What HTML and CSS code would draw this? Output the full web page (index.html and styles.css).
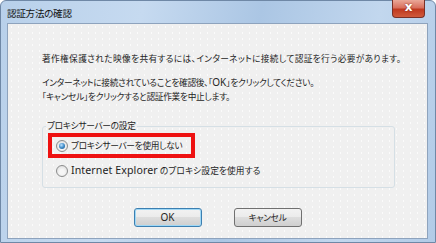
FILE: index.html
```html
<!DOCTYPE html>
<html lang="ja">
<head>
    <meta charset="UTF-8">
    <title>認証方法の確認</title>
    <link rel="stylesheet" href="styles.css">
</head>
<body>

    <div class="window">
        <div class="titlebar">
            <span class="title">認証方法の確認</span>
            <span class="close-btn">x</span>
        </div>

        <div class="client">
            <div class="content">
                <p class="msg msg-wide">著作権保護された映像を共有するには、インターネットに接続して認証を行う必要があります。</p>
                <p class="msg">インターネットに接続されていることを確認後、「<span class="latin">OK</span>」をクリックしてください。<br>「キャンセル」をクリックすると認証作業を中止します。</p>

                <fieldset class="group">
                    <legend>プロキシサーバーの設定</legend>
                    <div class="highlight">
                        <label class="option">
                            <span class="radio checked"></span>
                            <span>プロキシサーバーを使用しない</span>
                        </label>
                    </div>
                    <label class="option option-second">
                        <span class="radio"></span>
                        <span><span class="latin latin-wide">Internet Explorer</span>&nbsp;のプロキシ設定を使用する</span>
                    </label>
                </fieldset>
            </div>

            <div class="buttons">
                <button class="btn btn-default"><span class="latin">OK</span></button>
                <button class="btn">キャンセル</button>
            </div>
        </div>
    </div>

</body>
</html>
```

FILE: styles.css
```css
body {
    margin: 0;
    padding: 0;
    font-family: "Noto Sans CJK JP", "Noto Sans", sans-serif;
    font-size: 8.7px;
    letter-spacing: -0.3px;
    color: #1e1e1e;
    background-color: #fff;
}

.latin {
    font-family: "Noto Sans", sans-serif;
    font-size: 10px;
    letter-spacing: 0;
}

.latin-wide {
    font-size: 10.6px;
    letter-spacing: 0.1px;
}

.window {
    box-sizing: border-box;
    width: 436px;
    height: 243px;
    display: flex;
    flex-direction: column;
    border: 1px solid #6f88a6;
    border-radius: 6px 6px 0 0;
    background: linear-gradient(100deg, #b8d0ea 0%, #c6daf0 30%, #abc6e4 55%, #c2d7ee 80%, #b2cbe7 100%);
}

.titlebar {
    height: 22px;
    display: flex;
    justify-content: space-between;
    align-items: flex-start;
}

.title {
    padding: 6px 0 0 6px;
    font-size: 9.6px;
    line-height: 12px;
    color: #111;
    font-feature-settings: "palt";
}

.close-btn {
    box-sizing: border-box;
    width: 33px;
    height: 18px;
    margin: -1px 10px 0 0;
    border: 1px solid #7a3026;
    border-top: none;
    border-radius: 0 0 4px 4px;
    background: linear-gradient(#eaa898 0%, #d9705e 45%, #c0391f 55%, #d05a3c 100%);
    color: #fff;
    font-family: "DejaVu Sans", sans-serif;
    font-weight: bold;
    font-size: 12px;
    letter-spacing: 0;
    line-height: 15px;
    text-align: center;
    text-shadow: 0 0 2px #7a2010;
}

.client {
    flex: 1;
    margin: 0 7px 3px 6px;
    border: 1px solid #8ea3bd;
    background-color: #f0f0f0;
    background-image: radial-gradient(circle, #fbfbfb 0.7px, transparent 0.9px);
    background-size: 7px 6px;
}

.content {
    padding: 28px 32px 0 34px;
}

.msg {
    margin: 0 0 9px 0;
    line-height: 14px;
    font-feature-settings: "palt";
    white-space: nowrap;
}

.msg-wide {
    letter-spacing: 0.35px;
}

.group {
    margin: 15px 0 0 0;
    padding: 0 3px 9px 3px;
    border: 1px solid #d5dfe5;
    border-radius: 3px;
}

.group legend {
    padding: 0 1px;
    line-height: 14px;
    font-feature-settings: "palt";
}

.highlight {
    box-sizing: border-box;
    width: 147px;
    height: 25px;
    margin-left: 2px;
    padding-left: 4px;
    border: 4px solid #ee1111;
    display: flex;
    align-items: center;
}

.option {
    display: flex;
    align-items: center;
    gap: 3px;
    line-height: 14px;
    font-feature-settings: "palt";
    white-space: nowrap;
}

.option-second {
    margin: 5px 0 0 10px;
    letter-spacing: 0.1px;
}

.radio {
    box-sizing: border-box;
    width: 12px;
    height: 12px;
    border: 1px solid #8b8c8c;
    border-radius: 50%;
    background: radial-gradient(circle at 50% 60%, #f6f6f6 30%, #d6d6d6 100%);
    display: flex;
    align-items: center;
    justify-content: center;
}

.radio.checked::after {
    content: "";
    width: 6px;
    height: 6px;
    border-radius: 50%;
    background: radial-gradient(circle at 40% 35%, #bfe3ff 0%, #3f8cc9 50%, #1d4f80 100%);
}

.buttons {
    display: flex;
    justify-content: center;
    gap: 32px;
    margin-top: 20px;
}

.btn {
    width: 68px;
    height: 19px;
    padding: 0;
    border: 1px solid #707070;
    border-radius: 3px;
    background: linear-gradient(#f2f2f2 0%, #ebebeb 49%, #dddddd 50%, #cfcfcf 100%);
    font-family: "Noto Sans CJK JP", "Noto Sans", sans-serif;
    font-size: 8.7px;
    letter-spacing: -0.3px;
    color: #1e1e1e;
    font-feature-settings: "palt";
    line-height: 16px;
}

.btn-default {
    border-color: #3c7fb1;
    box-shadow: inset 0 0 0 1px #9fd8f6;
}
```
